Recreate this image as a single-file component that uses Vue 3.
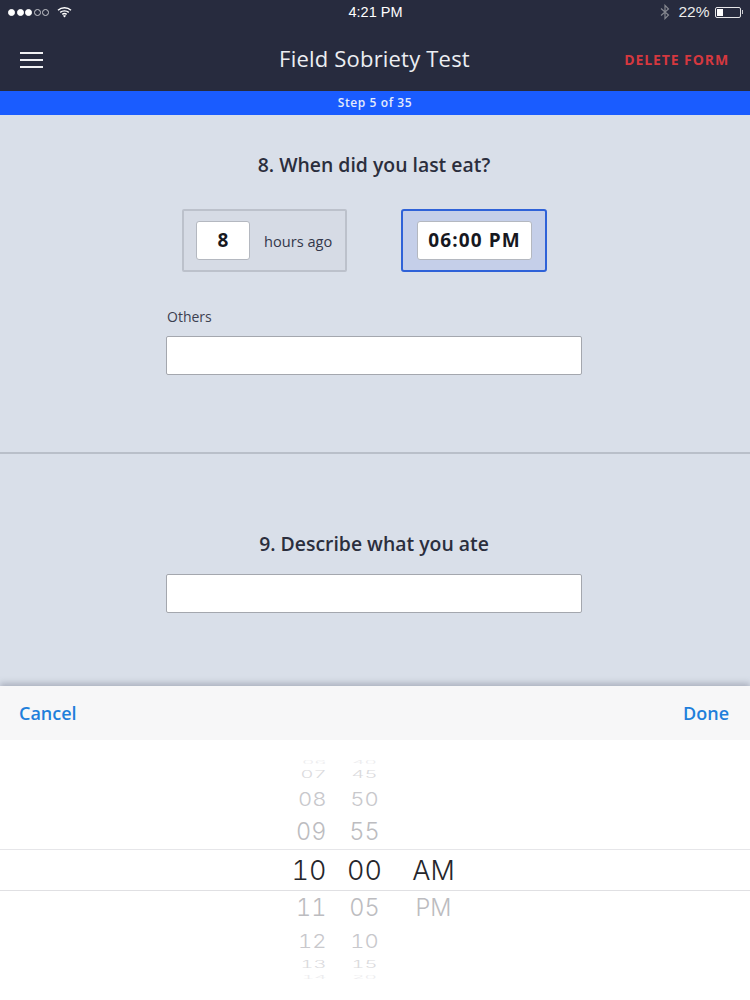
<script setup>
const rows = [
  { h: '06', m: '40', ap: '', height: 9, scale: 0.22, color: '#ececee', size: 19 },
  { h: '07', m: '45', ap: '', height: 16, scale: 0.48, color: '#dadadd', size: 20 },
  { h: '08', m: '50', ap: '', height: 32, scale: 0.85, color: '#c8c8cc', size: 22 },
  { h: '09', m: '55', ap: '', height: 34, scale: 1, color: '#bcbcc0', size: 23.5 },
  { h: '10', m: '00', ap: 'AM', height: 42, scale: 1, color: '#26262b', size: 27, on: true },
  { h: '11', m: '05', ap: 'PM', height: 34, scale: 1, color: '#bcbcc0', size: 23.5 },
  { h: '12', m: '10', ap: '', height: 32, scale: 0.85, color: '#c8c8cc', size: 22 },
  { h: '13', m: '15', ap: '', height: 16, scale: 0.48, color: '#dadadd', size: 20 },
  { h: '14', m: '20', ap: '', height: 9, scale: 0.22, color: '#ececee', size: 19 }
]
</script>

<template>
  <div class="page">
    <header class="top">
      <div class="status">
        <div class="status-left">
          <span class="dots">
            <i class="dot fill"></i><i class="dot fill"></i><i class="dot fill"></i><i class="dot"></i><i class="dot"></i>
          </span>
          <svg class="wifi" width="15" height="12" viewBox="0 0 15 12">
            <path d="M1 4.2C4.6 .9 10.4 .9 14 4.2" fill="none" stroke="#fff" stroke-width="1.4"/>
            <path d="M3.2 6.4C5.6 4.3 9.4 4.3 11.8 6.4" fill="none" stroke="#fff" stroke-width="1.4"/>
            <path d="M5.3 8.4C6.5 7.4 8.5 7.4 9.7 8.4" fill="none" stroke="#fff" stroke-width="1.4"/>
            <path d="M7.5 11.6L6 9.8C6.9 9.2 8.1 9.2 9 9.8Z" fill="#fff"/>
          </svg>
        </div>
        <span class="clock">4:21 PM</span>
        <div class="status-right">
          <svg width="10" height="16" viewBox="0 0 10 16">
            <path d="M1 4.5L8.5 11 5 14.6V1.4L8.5 5 1 11.5" fill="none" stroke="#85878f" stroke-width="1.2"/>
          </svg>
          <span class="pct">22%</span>
          <span class="battery"><i class="level"></i></span>
          <i class="nub"></i>
        </div>
      </div>
      <div class="nav">
        <button class="menu" aria-label="Menu"><i></i><i></i><i></i></button>
        <h1 class="title">Field Sobriety Test</h1>
        <span class="delete">DELETE FORM</span>
      </div>
    </header>
    <div class="step">Step 5 of 35</div>

    <main class="form">
      <section class="q q8">
        <h2 class="q-title">8. When did you last eat?</h2>
        <div class="choices">
          <div class="choice hours">
            <div class="field small">8</div>
            <span class="ago">hours ago</span>
          </div>
          <div class="choice time">
            <div class="field wide">06:00 PM</div>
          </div>
        </div>
        <div class="other">
          <label class="lbl">Others</label>
          <div class="input"></div>
        </div>
      </section>
      <section class="q q9">
        <h2 class="q-title">9. Describe what you ate</h2>
        <div class="other"><div class="input"></div></div>
      </section>
    </main>

    <aside class="sheet">
      <div class="bar">
        <span>Cancel</span>
        <span>Done</span>
      </div>
      <div class="wheel">
        <div
          v-for="(r, i) in rows"
          :key="i"
          class="row"
          :class="{ on: r.on }"
          :style="{ height: r.height + 'px', color: r.color, fontSize: r.size + 'px' }"
        >
          <span class="cell hh" :style="{ transform: `scaleY(${r.scale})` }">{{ r.h }}</span>
          <span class="cell mm" :style="{ transform: `scaleY(${r.scale})` }">{{ r.m }}</span>
          <span class="cell ap" :style="{ transform: `scaleY(${r.scale})` }">{{ r.ap }}</span>
        </div>
      </div>
    </aside>
  </div>
</template>

<style>
html, body { margin: 0; background: #fff; }
</style>

<style scoped>
.page {
  width: 750px;
  height: 1000px;
  overflow: hidden;
  display: flex;
  flex-direction: column;
  font-family: "Open Sans", "Noto Sans", sans-serif;
  background: #fff;
}
.top { background: #272b3e; height: 91px; flex: none; }
.status {
  height: 24px;
  display: grid;
  grid-template-columns: 1fr auto 1fr;
  align-items: center;
  padding: 0 7px 0 8px;
  color: #fff;
  font: 14.5px "Liberation Sans", sans-serif;
}
.status-left { display: flex; align-items: center; gap: 8px; }
.dots { display: flex; gap: 1.5px; }
.dot {
  width: 7px;
  height: 7px;
  box-sizing: border-box;
  border: 1px solid #c9cad0;
  border-radius: 50%;
}
.dot.fill { background: #fff; border-color: #fff; }
.clock { text-align: center; }
.status-right { display: flex; align-items: center; justify-content: flex-end; }
.pct { margin-left: 8px; margin-right: 5px; color: #eceded; font-size: 15.5px; }
.battery {
  width: 26px;
  height: 11px;
  box-sizing: border-box;
  border: 1px solid #e6e6e8;
  border-radius: 2px;
  padding: 1px;
  display: flex;
}
.level { width: 6px; background: #fff; }
.nub { width: 1.5px; height: 4px; background: #c9cad0; margin-left: 1px; }
.nav {
  height: 67px;
  display: grid;
  grid-template-columns: 1fr auto 1fr;
  align-items: center;
  padding: 0 21px 0 20px;
}
.menu {
  width: 23px;
  height: 17px;
  padding: 0;
  border: 0;
  background: none;
  display: flex;
  flex-direction: column;
  justify-content: space-between;
  margin-top: 5px;
}
.menu i { display: block; height: 2.4px; background: #f1f1f3; }
.title {
  margin: 1px 0 0;
  color: #eceef2;
  font-size: 22px;
  font-weight: 400;
  letter-spacing: 0.2px;
  white-space: nowrap;
}
.delete {
  justify-self: end;
  color: #d5383f;
  font-size: 14px;
  font-weight: 700;
  letter-spacing: 0.9px;
  margin-top: 4px;
  white-space: nowrap;
}
.step {
  height: 24px;
  flex: none;
  background: #1a5cff;
  color: #e4ebfb;
  font-size: 12px;
  font-weight: 600;
  line-height: 24px;
  text-align: center;
  letter-spacing: 0.6px;
}
.form { height: 571px; flex: none; background: #d9dfe9; }
.q { box-sizing: border-box; display: flex; flex-direction: column; align-items: center; }
.q8 { height: 339px; padding-top: 36px; border-bottom: 2px solid #b9bfc9; }
.q9 { padding-top: 76px; }
.q-title {
  margin: 0 2px 0 0;
  color: #2b2e3d;
  font-size: 19.4px;
  line-height: 28px;
  font-weight: 600;
}
.q9 .q-title { margin-bottom: 16px; }
.choices { display: flex; gap: 54px; margin: 30px 21px 0 0; }
.choice {
  box-sizing: border-box;
  height: 63px;
  display: flex;
  align-items: center;
  border-radius: 2px;
}
.hours {
  width: 165px;
  padding: 0 12px;
  background: #d6dbe5;
  border: 2px solid #bcc1cb;
}
.time {
  width: 146px;
  justify-content: center;
  padding-left: 1px;
  background: #c5cfe9;
  border: 2px solid #2f62d8;
  border-radius: 3px;
}
.field {
  box-sizing: border-box;
  height: 39px;
  background: #fff;
  border: 1px solid #b4b8c0;
  border-radius: 3px;
  color: #17181f;
  font-weight: 700;
  font-size: 19px;
  line-height: 37px;
  text-align: center;
}
.small { width: 54px; }
.wide { width: 115px; letter-spacing: 1.1px; }
.ago {
  margin-left: 14px;
  color: #33374a;
  font-size: 14.6px;
  font-weight: 500;
  white-space: nowrap;
}
.other { width: 416px; margin-right: 2px; }
.q8 .other { margin-top: 35px; }
.lbl {
  display: block;
  color: #3c4050;
  font-size: 14px;
  line-height: 20px;
  margin: 0 0 9px 1px;
}
.input {
  box-sizing: border-box;
  height: 39px;
  background: #fff;
  border: 1px solid #a4a7ae;
  border-radius: 2px;
}
.sheet {
  flex: 1;
  background: #fff;
  position: relative;
  box-shadow: 0 -3px 6px rgba(90, 95, 115, 0.35);
}
.bar {
  height: 54px;
  display: flex;
  align-items: center;
  justify-content: space-between;
  padding: 0 21px 0 19px;
  background: #f7f7f8;
  color: #1f7fdb;
  font-size: 18px;
  font-weight: 600;
}
.wheel { padding-top: 18px; }
.row {
  box-sizing: border-box;
  display: flex;
  align-items: center;
  justify-content: center;
  padding-left: 12px;
  font-family: Inter, "Liberation Sans", sans-serif;
  font-variant-numeric: tabular-nums;
  font-weight: 300;
  white-space: nowrap;
}
.row.on {
  border-top: 1.5px solid #e6e6e9;
  border-bottom: 1px solid #e0e0e3;
}
.cell { display: block; text-align: center; line-height: 1; }
.hh { width: 54px; margin-left: -3px; box-sizing: border-box; text-align: right; padding-right: 11px; }
.mm { width: 54px; }
.ap { width: 84px; }
</style>
